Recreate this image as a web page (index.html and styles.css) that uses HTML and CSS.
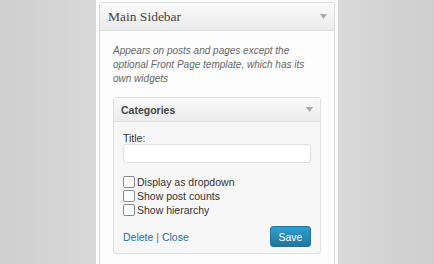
FILE: index.html
```html
<!DOCTYPE html>
<html lang="en">
<head>
    <meta charset="UTF-8">
    <title>Widgets - Main Sidebar</title>
    <link rel="stylesheet" href="styles.css">
</head>
<body>
    <div class="sidebar-column">
        <div class="sidebar-box">
            <div class="sidebar-head">
                <h3>Main Sidebar</h3>
                <svg class="arrow" width="7" height="5" viewBox="0 0 7 5"><path d="M0 0H7L3.5 5Z"/></svg>
            </div>
            <div class="sidebar-body">
                <p class="description">Appears on posts and pages except the optional Front Page template, which has its own widgets</p>

                <div class="widget">
                    <div class="widget-head">
                        <h4>Categories</h4>
                        <svg class="arrow" width="7" height="5" viewBox="0 0 7 5"><path d="M0 0H7L3.5 5Z"/></svg>
                    </div>
                    <div class="widget-body">
                        <label class="title-label" for="title">Title:</label>
                        <input type="text" id="title" class="title-input">

                        <div class="checks">
                            <label><input type="checkbox"> Display as dropdown</label>
                            <label><input type="checkbox"> Show post counts</label>
                            <label><input type="checkbox"> Show hierarchy</label>
                        </div>

                        <div class="widget-actions">
                            <div class="links">
                                <a href="#">Delete</a> | <a href="#">Close</a>
                            </div>
                            <button type="button">Save</button>
                        </div>
                    </div>
                </div>
            </div>
        </div>
    </div>
</body>
</html>
```

FILE: styles.css
```css
body {
    margin: 0;
    height: 264px;
    overflow: hidden;
    display: flex;
    justify-content: center;
    font-family: "Liberation Sans", Arial, sans-serif;
    background: linear-gradient(to right, #cecece, #d9d9d9 22%, #dedede 50%, #d9d9d9 78%, #cecece);
}

.sidebar-column {
    width: 242px;
    padding: 2px 3px 0;
    box-sizing: border-box;
    background-color: #fdfdfd;
}

.sidebar-box {
    height: 100%;
    border: 1px solid #dcdcdc;
    border-bottom: none;
    border-radius: 3px 3px 0 0;
    background-color: #fdfdfd;
}

.sidebar-head {
    height: 27px;
    display: flex;
    align-items: center;
    justify-content: space-between;
    padding: 0 7px 0 8px;
    border-bottom: 1px solid #dfdfdf;
    background: linear-gradient(to bottom, #f9f9f9, #ececec);
}

.sidebar-head h3 {
    margin: 0;
    font-family: "Liberation Serif", "Times New Roman", serif;
    font-weight: normal;
    font-size: 13.5px;
    color: #464646;
}

.arrow {
    fill: #aaa;
}

.sidebar-body {
    padding: 13px 13px 0 13px;
}

.description {
    margin: 0 0 11px 0;
    font-style: italic;
    font-size: 10px;
    line-height: 14px;
    color: #666;
}

.widget {
    border: 1px solid #dfdfdf;
    border-radius: 3px;
    background-color: #f7f7f7;
}

.widget-head {
    height: 23px;
    display: flex;
    align-items: center;
    justify-content: space-between;
    padding: 0 7px 0 7px;
    border-bottom: 1px solid #dfdfdf;
    background: linear-gradient(to bottom, #f9f9f9, #ececec);
}

.widget-head h4 {
    margin: 0;
    font-size: 10.5px;
    font-weight: bold;
    color: #464646;
}

.widget-body {
    padding: 10px 9px 6px 9px;
}

.title-label {
    display: block;
    font-size: 10.5px;
    color: #333;
}

.title-input {
    display: block;
    width: 100%;
    height: 19px;
    box-sizing: border-box;
    margin: 0;
    border: 1px solid #dfdfdf;
    border-radius: 3px;
    background-color: #fff;
}

.checks {
    margin-top: 12px;
}

.checks label {
    display: flex;
    align-items: center;
    height: 14px;
    font-size: 10.5px;
    color: #333;
}

.checks input {
    width: 12px;
    height: 12px;
    margin: 0 2px 0 0;
    appearance: none;
    border: 1px solid #8a8a8a;
    border-radius: 2px;
    background-color: #fff;
}

.widget-actions {
    display: flex;
    align-items: center;
    justify-content: space-between;
    margin-top: 9px;
}

.links {
    font-size: 10.5px;
    color: #666;
}

.links a {
    color: #21759b;
    text-decoration: none;
}

button {
    width: 41px;
    height: 21px;
    padding: 0;
    border: 1px solid #21759b;
    border-radius: 3px;
    background: linear-gradient(to bottom, #2e9fd2, #21759b);
    color: white;
    font-family: "Liberation Sans", Arial, sans-serif;
    font-size: 10.5px;
    cursor: pointer;
}
```
